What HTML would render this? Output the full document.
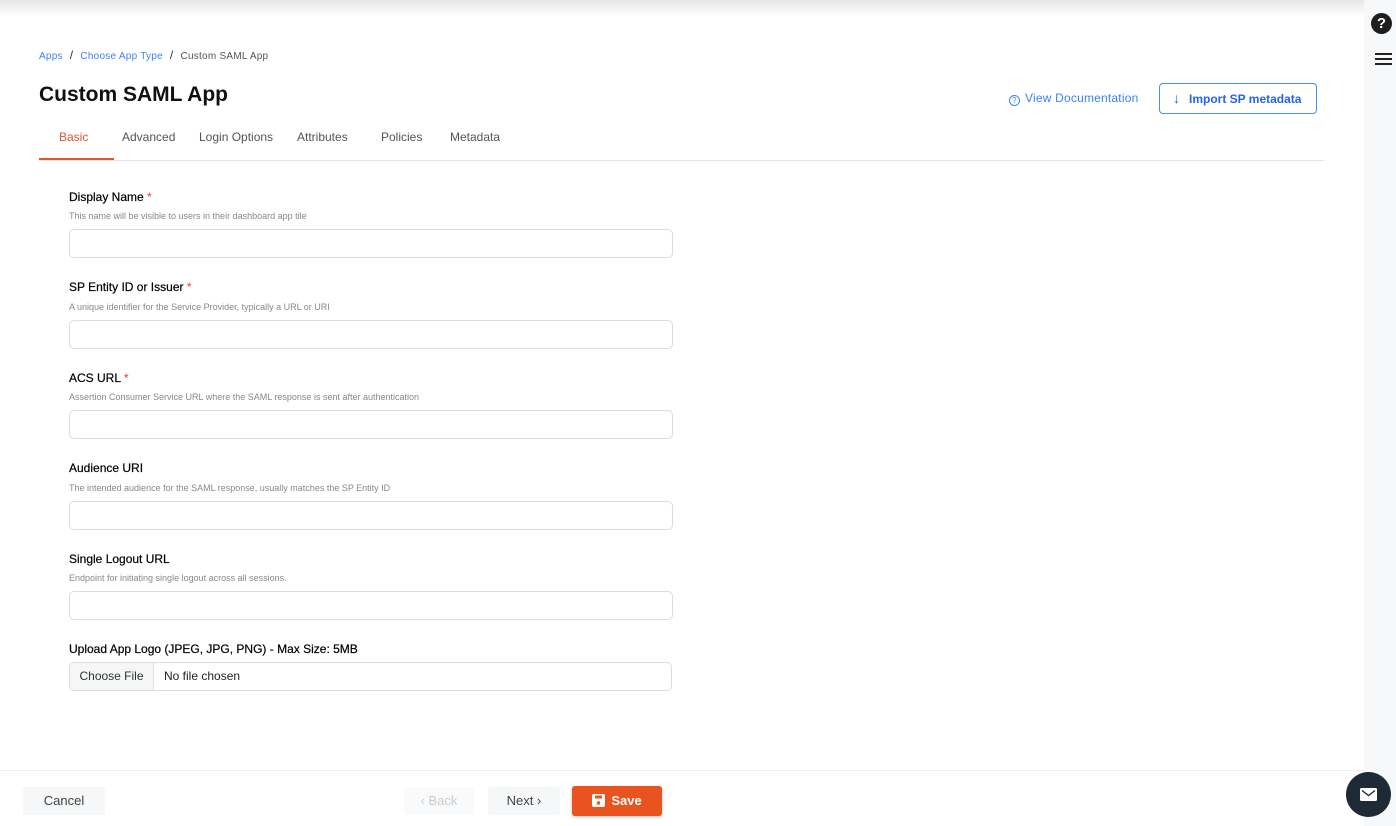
<!DOCTYPE html>
<html><head><meta charset="utf-8"><style>
*{box-sizing:border-box;margin:0;padding:0}
body{width:1396px;height:826px;overflow:hidden;background:#fff;font-family:"Liberation Sans",sans-serif;position:relative;color:#222}
.a{position:absolute}
.topbar{left:0;top:0;width:1364px;height:16px;background:linear-gradient(#e6e6e6,#fff)}
.side{left:1364px;top:0;width:32px;height:826px;background:#f7f8fa}
.bc{top:48px;left:39px;font-size:10px;color:#555;letter-spacing:0.25px}
.bc span.l{color:#3b82f6}
.bc .s{margin:0 7px;color:#333;font-size:12px}
h1{position:absolute;left:39px;top:83px;font-size:21px;font-weight:bold;color:#111}
.tabs{top:130px;left:39px;font-size:12px;color:#555}
.tab{position:absolute;top:0;white-space:nowrap}
.tabline{left:39px;top:160px;width:1285px;height:1px;background:#e5e5e5}
.lbl{left:69px;font-size:12px;color:#000;-webkit-text-stroke:0.2px #000}
.lbl b{color:#e03a3a;font-weight:normal;-webkit-text-stroke:0}
.hint{left:69px;font-size:9px;color:#888}
.inp{left:69px;width:604px;height:29px;border:1px solid #dcdcdc;border-radius:5px;background:#fff}
.foot{left:0;top:770px;width:1364px;height:56px;border-top:1px solid #f0f0f0;background:#fff}
.btn{position:absolute;font-size:13px;border-radius:3px;text-align:center;line-height:28px;height:28px}
</style></head><body>
<div class="a topbar"></div>
<div class="a side"></div>
<div class="a" style="left:1371px;top:13px;width:21px;height:21px;border-radius:50%;background:#1e1e1e;color:#fff;font-weight:bold;font-size:15px;text-align:center;line-height:21px">?</div>
<div class="a" style="left:1375px;top:53px;width:17px;height:2px;background:#222"></div>
<div class="a" style="left:1375px;top:58px;width:17px;height:2px;background:#222"></div>
<div class="a" style="left:1375px;top:63px;width:17px;height:2px;background:#222"></div>

<div class="a bc"><span class="l">Apps</span><span class="s">/</span><span class="l">Choose App Type</span><span class="s">/</span>Custom SAML App</div>
<h1>Custom SAML App</h1>

<div class="a" style="left:1009px;top:91px;font-size:12px;color:#3b82f6;letter-spacing:0.2px"><span style="display:inline-block;width:11px;height:11px;border:1.3px solid #3b82f6;border-radius:50%;font-size:8px;line-height:9px;text-align:center;vertical-align:-1px;margin-right:5px">?</span>View Documentation</div>
<div class="a" style="left:1159px;top:83px;width:158px;height:31px;border:1px solid #4a8cf0;border-radius:4px;font-size:12px;font-weight:bold;color:#2563eb;line-height:29px;padding-left:13px"><span style="font-weight:normal;font-size:14px;margin-right:9px">↓</span>Import SP metadata</div>

<div class="a tabs">
<div class="tab" style="left:20px;color:#e0562f">Basic</div>
<div class="tab" style="left:83px">Advanced</div>
<div class="tab" style="left:160px">Login Options</div>
<div class="tab" style="left:258px">Attributes</div>
<div class="tab" style="left:342px">Policies</div>
<div class="tab" style="left:411px">Metadata</div>
</div>
<div class="a tabline"></div>
<div class="a" style="left:39px;top:158px;width:75px;height:2px;background:#e0562f"></div>

<div class="a lbl" style="top:190px">Display Name <b>*</b></div>
<div class="a hint" style="top:211px">This name will be visible to users in their dashboard app tile</div>
<div class="a inp" style="top:229px"></div>

<div class="a lbl" style="top:280px">SP Entity ID or Issuer <b>*</b></div>
<div class="a hint" style="top:302px">A unique identifier for the Service Provider, typically a URL or URI</div>
<div class="a inp" style="top:320px"></div>

<div class="a lbl" style="top:371px">ACS URL <b>*</b></div>
<div class="a hint" style="top:392px">Assertion Consumer Service URL where the SAML response is sent after authentication</div>
<div class="a inp" style="top:410px"></div>

<div class="a lbl" style="top:461px">Audience URI</div>
<div class="a hint" style="top:483px">The intended audience for the SAML response, usually matches the SP Entity ID</div>
<div class="a inp" style="top:501px"></div>

<div class="a lbl" style="top:552px">Single Logout URL</div>
<div class="a hint" style="top:573px">Endpoint for initiating single logout across all sessions.</div>
<div class="a inp" style="top:591px"></div>

<div class="a lbl" style="top:642px">Upload App Logo (JPEG, JPG, PNG) - Max Size: 5MB</div>
<div class="a inp" style="top:662px;width:603px;font-size:12px;overflow:hidden">
<span style="display:inline-block;width:84px;height:27px;background:#f5f6f7;border-right:1px solid #e2e2e2;line-height:27px;text-align:center;color:#333">Choose File</span><span style="margin-left:10px;color:#222">No file chosen</span></div>

<div class="a foot"></div>
<div class="btn" style="left:23px;top:787px;width:82px;background:#f6f7f8;color:#444">Cancel</div>
<div class="btn" style="left:404px;top:787px;width:70px;background:#f9fafb;color:#ccc">‹ Back</div>
<div class="btn" style="left:488px;top:787px;width:72px;background:#f6f7f8;color:#444">Next ›</div>
<div class="btn" style="left:572px;top:786px;width:90px;height:30px;line-height:30px;background:#e8531f;color:#fff;font-weight:bold;box-shadow:0 1px 3px rgba(0,0,0,.25)"><svg width="13" height="13" viewBox="0 0 13 13" style="vertical-align:-2px;margin-right:6px"><rect x="0" y="0" width="13" height="13" rx="2" fill="#fff"/><rect x="3" y="1.5" width="7" height="3" fill="#e8531f"/><circle cx="6.5" cy="9" r="1.7" fill="#e8531f"/></svg>Save</div>

<div class="a" style="left:1346px;top:772px;width:45px;height:45px;border-radius:50%;background:#1e2a36"></div>
<svg class="a" style="left:1360px;top:788px" width="17" height="13" viewBox="0 0 17 13"><rect width="17" height="13" rx="1.5" fill="#fff"/><path d="M2 2.5l6.5 5 6.5-5" stroke="#1e2a36" stroke-width="1.4" fill="none"/></svg>
</body></html>
